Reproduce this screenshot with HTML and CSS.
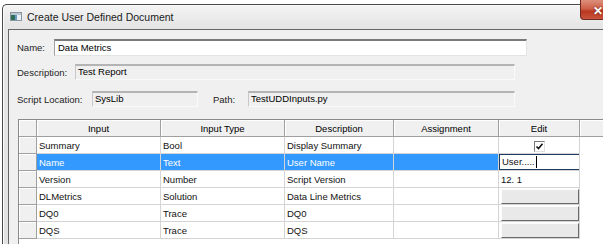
FILE: index.html
```html
<!DOCTYPE html>
<html lang="en">
<head>
  <meta charset="UTF-8">
  <title>Create User Defined Document</title>
  <link rel="stylesheet" href="styles.css">
</head>
<body>
  <div class="window">
    <div class="title-bar">
      <svg class="app-icon" width="12" height="9" viewBox="0 0 12 9">
        <rect x="0.5" y="0.5" width="11" height="8" fill="#e9eef2" stroke="#8a96a0"/>
        <rect x="1" y="1" width="10" height="2" fill="#b9c6d2"/>
        <rect x="1" y="3" width="4" height="5" fill="#2f6f5a"/>
        <rect x="5" y="3" width="2" height="5" fill="#6a9bc4"/>
      </svg>
      <span class="title">Create User Defined Document</span>
      <div class="close-btn">✕</div>
    </div>

    <div class="panel">
      <div class="field-row row-name">
        <label class="lbl lbl-name">Name:</label>
        <div class="edit-box name-box">Data Metrics</div>
      </div>
      <div class="field-row row-desc">
        <label class="lbl lbl-desc">Description:</label>
        <div class="ro-box desc-box">Test Report</div>
      </div>
      <div class="field-row row-script">
        <label class="lbl lbl-script">Script Location:</label>
        <div class="ro-box loc-box">SysLib</div>
        <label class="lbl lbl-path">Path:</label>
        <div class="ro-box path-box">TestUDDInputs.py</div>
      </div>

      <div class="grid-frame">
        <table class="grid">
          <colgroup>
            <col style="width:18px">
            <col style="width:124px">
            <col style="width:124px">
            <col style="width:109px">
            <col style="width:105px">
            <col style="width:81px">
            <col style="width:60px">
          </colgroup>
          <thead>
            <tr>
              <th class="corner"></th>
              <th>Input</th>
              <th>Input Type</th>
              <th>Description</th>
              <th>Assignment</th>
              <th>Edit</th>
              <th class="filler"></th>
            </tr>
          </thead>
          <tbody>
            <tr>
              <th class="rowhead"></th>
              <td>Summary</td>
              <td>Bool</td>
              <td>Display Summary</td>
              <td></td>
              <td class="edit-cell"><span class="check">
                <svg width="9" height="9" viewBox="0 0 9 9"><path d="M1.5 4.5 L3.5 6.5 L7.5 1.8" fill="none" stroke="#111" stroke-width="1.6"/></svg>
              </span></td>
              <td class="empty"></td>
            </tr>
            <tr class="selected">
              <th class="rowhead"></th>
              <td>Name</td>
              <td>Text</td>
              <td>User Name</td>
              <td></td>
              <td class="edit-cell"><div class="inline-editor">User.....<span class="caret"></span></div></td>
              <td class="empty"></td>
            </tr>
            <tr>
              <th class="rowhead"></th>
              <td>Version</td>
              <td>Number</td>
              <td>Script Version</td>
              <td></td>
              <td>12. 1</td>
              <td class="empty"></td>
            </tr>
            <tr>
              <th class="rowhead"></th>
              <td>DLMetrics</td>
              <td>Solution</td>
              <td>Data Line Metrics</td>
              <td></td>
              <td class="edit-cell"><div class="cell-btn"></div></td>
              <td class="empty"></td>
            </tr>
            <tr>
              <th class="rowhead"></th>
              <td>DQ0</td>
              <td>Trace</td>
              <td>DQ0</td>
              <td></td>
              <td class="edit-cell"><div class="cell-btn"></div></td>
              <td class="empty"></td>
            </tr>
            <tr>
              <th class="rowhead"></th>
              <td>DQS</td>
              <td>Trace</td>
              <td>DQS</td>
              <td></td>
              <td class="edit-cell"><div class="cell-btn"></div></td>
              <td class="empty"></td>
            </tr>
          </tbody>
        </table>
      </div>
    </div>
  </div>
</body>
</html>
```

FILE: styles.css
```css
* {
  box-sizing: border-box;
}

html, body {
  margin: 0;
  background: #ffffff;
  overflow: hidden;
  height: 244px;
}

body {
  font-family: "Liberation Sans", Arial, sans-serif;
  font-size: 9.5px;
  color: #000;
}

.window {
  margin: 4px 0 0 2px;
  width: 601px;
  height: 240px;
  border-top: 1px solid #4a4a4a;
  border-left: 1px solid #4a4a4a;
  border-radius: 5px 0 0 0;
  padding-left: 5px;
  background: linear-gradient(#f4f4f4, #e6e6e6 20px, #e2e2e2);
  box-shadow: inset 1px 1px 0 #fbfbfb;
}

.title-bar {
  height: 24px;
  display: flex;
  align-items: center;
  padding-left: 2px;
}

.app-icon {
  display: block;
  margin-top: -1px;
}

.title {
  margin-left: 5px;
  font-size: 10.5px;
  color: #1a1a1a;
  margin-top: -1px;
}

.close-btn {
  margin-left: auto;
  align-self: flex-start;
  margin-top: -5px;
  width: 23px;
  height: 20px;
  overflow: hidden;
  border-left: 1px solid #6e2a1e;
  border-bottom: 1px solid #6e2a1e;
  border-radius: 0 0 0 4px;
  background: linear-gradient(#dc8f7c, #d0604a 45%, #b8381f 60%, #c8553c);
  color: #fff;
  font-size: 12px;
  font-weight: bold;
  line-height: 22px;
  padding-left: 12px;
  white-space: nowrap;
  text-shadow: 0 0 2px #5a1a10;
}

.panel {
  border-top: 1px solid #666;
  border-left: 1px solid #666;
  background: #f0f0f0;
  height: 215px;
  overflow: hidden;
  padding: 9px 0 0 8px;
}

.field-row {
  display: flex;
  align-items: center;
  height: 17px;
}

.row-desc {
  margin-top: 8px;
  height: 16px;
}

.row-script {
  margin-top: 11px;
  height: 16px;
}

.lbl {
  color: #222;
  white-space: nowrap;
}

.lbl-name { width: 37px; }
.lbl-desc { width: 58px; }
.lbl-script { width: 75px; }
.lbl-path { width: 35px; margin-left: 15px; }

.edit-box {
  width: 473px;
  height: 17px;
  background: #fff;
  border-top: 2px solid #7a7a7a;
  border-left: 1px solid #a0a0a0;
  border-right: 1px solid #e3e3e3;
  border-bottom: 1px solid #e3e3e3;
  padding-left: 3px;
  line-height: 13px;
}

.ro-box {
  height: 16px;
  background: #f0f0f0;
  border-top: 2px solid #b4b4b4;
  border-left: 1px solid #c8c8c8;
  border-right: 1px solid #fafafa;
  border-bottom: 1px solid #fafafa;
  padding-left: 2px;
  line-height: 12px;
}

.desc-box { width: 440px; }
.loc-box { width: 106px; }
.path-box { width: 267px; }

.grid-frame {
  margin: 12px 0 0 1px;
  width: 585px;
  height: 125px;
  overflow: hidden;
  background: #fff;
  border-top: 1px solid #8a8a8a;
  border-left: 1px solid #8a8a8a;
}

.grid {
  table-layout: fixed;
  border-collapse: separate;
  border-spacing: 0;
  width: 621px;
}

.grid tr {
  height: 17px;
}

.grid th,
.grid td {
  padding: 0;
  height: 17px;
  white-space: nowrap;
  overflow: hidden;
}

.grid thead th {
  font-weight: normal;
  text-align: center;
  background: #f0f0f0;
  border-right: 1px solid #a0a0a0;
  border-bottom: 1px solid #a0a0a0;
  box-shadow: inset 1px 1px 0 #ffffff;
}

.grid thead th.filler {
  border-right: none;
}

.grid .rowhead {
  background: #f0f0f0;
  border-right: 1px solid #a0a0a0;
  border-bottom: 1px solid #a0a0a0;
  box-shadow: inset 1px 1px 0 #ffffff;
}

.grid td {
  padding-left: 2px;
  border-right: 1px solid #d4d4d4;
  border-bottom: 1px solid #d4d4d4;
  color: #111;
}

.grid td.empty {
  border: none;
}

.grid td.edit-cell {
  padding: 0;
}

.selected td {
  background: #3399ff;
  color: #fff;
}

.selected td.edit-cell,
.selected td.empty {
  background: #fff;
}

.check {
  display: block;
  margin: 2px auto 0;
  width: 11px;
  height: 11px;
  background: #fff;
  border-top: 1px solid #7a7a7a;
  border-left: 1px solid #7a7a7a;
  border-right: 1px solid #e0e0e0;
  border-bottom: 1px solid #e0e0e0;
}

.check svg {
  display: block;
}

.inline-editor {
  height: 16px;
  width: 81px;
  border: 1px solid #1d3a60;
  background: #fff;
  color: #111;
  padding-left: 2px;
  line-height: 14px;
  display: flex;
  align-items: center;
}

.caret {
  display: inline-block;
  width: 1px;
  height: 12px;
  background: #000;
  margin-left: 1px;
}

.cell-btn {
  margin: 1px 0 0 2px;
  width: 78px;
  height: 15px;
  background: #e9e9e9;
  border-top: 1px solid #fdfdfd;
  border-left: 1px solid #fdfdfd;
  border-right: 1px solid #6a6a6a;
  border-bottom: 1px solid #6a6a6a;
}
```
